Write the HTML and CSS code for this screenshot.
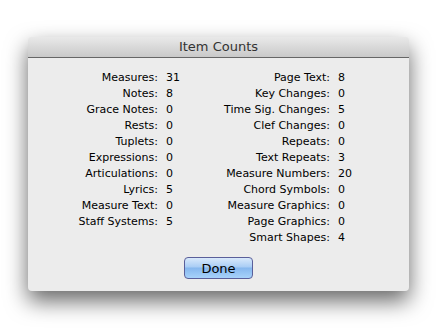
FILE: index.html
```html
<!DOCTYPE html>
<html lang="en">
<head>
    <meta charset="UTF-8">
    <title>Item Counts</title>
    <link rel="stylesheet" href="styles.css">
</head>
<body>
    <div class="window">
        <div class="titlebar">Item Counts</div>

        <div class="content">
            <div class="counts">
                <div class="col col-left">
                    <span class="label">Measures:</span><span class="value">31</span>
                    <span class="label">Notes:</span><span class="value">8</span>
                    <span class="label">Grace Notes:</span><span class="value">0</span>
                    <span class="label">Rests:</span><span class="value">0</span>
                    <span class="label">Tuplets:</span><span class="value">0</span>
                    <span class="label">Expressions:</span><span class="value">0</span>
                    <span class="label">Articulations:</span><span class="value">0</span>
                    <span class="label">Lyrics:</span><span class="value">5</span>
                    <span class="label">Measure Text:</span><span class="value">0</span>
                    <span class="label">Staff Systems:</span><span class="value">5</span>
                </div>
                <div class="col col-right">
                    <span class="label">Page Text:</span><span class="value">8</span>
                    <span class="label">Key Changes:</span><span class="value">0</span>
                    <span class="label">Time Sig. Changes:</span><span class="value">5</span>
                    <span class="label">Clef Changes:</span><span class="value">0</span>
                    <span class="label">Repeats:</span><span class="value">0</span>
                    <span class="label">Text Repeats:</span><span class="value">3</span>
                    <span class="label">Measure Numbers:</span><span class="value">20</span>
                    <span class="label">Chord Symbols:</span><span class="value">0</span>
                    <span class="label">Measure Graphics:</span><span class="value">0</span>
                    <span class="label">Page Graphics:</span><span class="value">0</span>
                    <span class="label">Smart Shapes:</span><span class="value">4</span>
                </div>
            </div>

            <div class="actions">
                <button type="button" class="btn-done">Done</button>
            </div>
        </div>
    </div>
</body>
</html>
```

FILE: styles.css
```css
body {
    margin: 0;
    padding: 37px 0 37px 28px;
    background-color: #ffffff;
    font-family: "DejaVu Sans", sans-serif;
    color: #000;
}
.window {
    width: 381px;
    height: 254px;
    background-color: #ececec;
    border-radius: 4px;
    box-shadow: 0 10px 22px rgba(0, 0, 0, 0.6);
    overflow: hidden;
}
.titlebar {
    height: 20px;
    line-height: 20px;
    text-align: center;
    font-size: 13px;
    color: #333;
    background: linear-gradient(#e9e9e9, #c9c9c9);
    border-bottom: 1px solid #666;
}
.content {
    padding-top: 12px;
}
.counts {
    display: flex;
    align-items: flex-start;
}
.col {
    display: grid;
    column-gap: 8px;
    font-size: 11px;
    line-height: 16px;
}
.col-left {
    grid-template-columns: 130px 30px;
}
.col-right {
    grid-template-columns: 134px 30px;
}
.label {
    text-align: right;
}
.actions {
    display: flex;
    justify-content: center;
    margin-top: 11px;
}
.btn-done {
    width: 69px;
    height: 22px;
    padding: 0;
    font-family: "DejaVu Sans", sans-serif;
    font-size: 13px;
    color: #000;
    border: 1px solid #5a5f9a;
    border-radius: 4px;
    background: linear-gradient(#d9e9fb 0%, #a9cdf5 45%, #86b7ee 50%, #a7d2fa 100%);
}
```
